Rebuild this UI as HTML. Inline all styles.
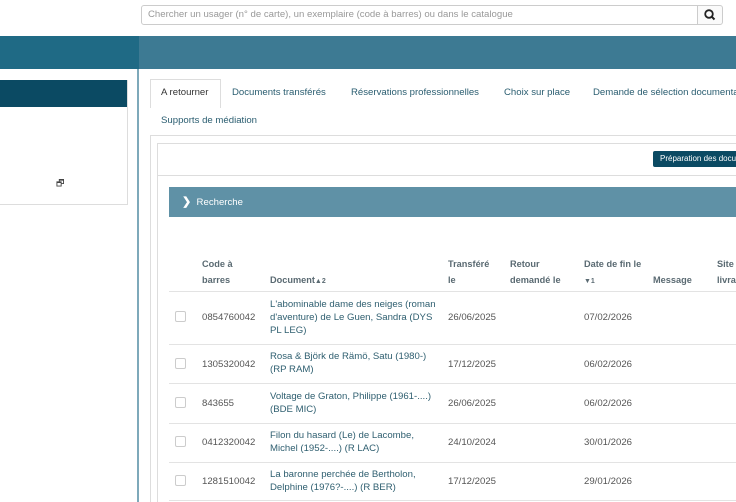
<!DOCTYPE html>
<html style="overflow:hidden;width:736px;height:502px"><head><meta charset="utf-8"><style>
*{box-sizing:border-box;margin:0;padding:0}
body{width:736px;height:502px;overflow:hidden;background:#fff;font-family:"Liberation Sans",sans-serif;font-size:10px;color:#333;position:relative}
.a{position:absolute}
.td{position:absolute;color:#555;font-size:9.6px;line-height:13px;white-space:nowrap}
.dc{color:#2f5f70}
.th{position:absolute;font-size:9.2px;line-height:16px;font-weight:bold;color:#5a6a72}
.cb{position:absolute;left:175px;width:11px;height:11px;border:1px solid #ccc;border-radius:2px}
.hr{position:absolute;left:169px;right:0;height:1px;background:#e3e3e3}
</style></head><body>
<div class="a" style="left:141px;top:5px;width:557px;height:20px;border:1px solid #ccc;border-radius:3px 0 0 3px;color:#999;font-size:9.6px;line-height:18px;padding-left:6px;white-space:nowrap">Chercher un usager (n° de carte), un exemplaire (code à barres) ou dans le catalogue</div>
<div class="a" style="left:697px;top:5px;width:26px;height:20px;border:1px solid #ccc;background:#fafafa;border-radius:0 3px 3px 0">
<svg width="24" height="18" viewBox="0 0 24 18"><circle cx="11" cy="8" r="3.8" fill="none" stroke="#222" stroke-width="1.8"/><path d="M13.7 10.7 L16.5 13.5" stroke="#222" stroke-width="2"/></svg></div>
<div class="a" style="left:0;top:36px;width:139px;height:33px;background:#1f6a85"></div>
<div class="a" style="left:139px;top:36px;right:0;height:33px;background:#3d7a93"></div>
<div class="a" style="left:137px;top:69px;width:2px;height:433px;background:#7ea9ba"></div>
<div class="a" style="left:0;top:80px;width:128px;height:125px;border:1px solid #ddd;border-left:none"></div>
<div class="a" style="left:0;top:80px;width:127px;height:27px;background:#0b4a63"></div>
<div class="a" style="left:56px;top:176px;font-size:9px;color:#444">&#x1F5D7;</div>
<div class="a" style="left:150px;top:79px;width:71px;height:29px;border:1px solid #ddd;border-bottom:none;background:#fff"></div>
<div class="a" style="left:161px;top:87px;color:#333;font-size:9.6px">A retourner</div>
<div class="a" style="left:232px;top:87px;color:#2a5d70;font-size:9.6px">Documents transférés</div>
<div class="a" style="left:351px;top:87px;color:#2a5d70;font-size:9.6px">Réservations professionnelles</div>
<div class="a" style="left:504px;top:87px;color:#2a5d70;font-size:9.6px">Choix sur place</div>
<div class="a" style="left:593px;top:87px;color:#2a5d70;font-size:9.6px;white-space:nowrap">Demande de sélection documentaire</div>
<div class="a" style="left:161px;top:115px;color:#2a5d70;font-size:9.6px">Supports de médiation</div>
<div class="a" style="left:150px;top:135px;width:586px;height:367px;border:1px solid #ddd;border-right:none;border-bottom:none"></div>
<div class="a" style="left:157px;top:143px;width:579px;height:33px;border:1px solid #ddd;border-right:none"></div>
<div class="a" style="left:653px;top:151px;width:100px;height:16px;background:#0b4a63;border-radius:2px;color:#fff;font-size:8px;line-height:16px;padding-left:7px;white-space:nowrap">Préparation des documents</div>
<div class="a" style="left:157px;top:176px;width:1px;height:326px;background:#ddd"></div>
<div class="a" style="left:169px;top:187px;right:0;height:30px;background:#5f91a6;color:#fff;font-size:9.6px;line-height:30px;padding-left:13px"><b style="font-size:11px">&#x276F;</b>&nbsp; Recherche</div>
<div class="th" style="left:202px;top:256px">Code à<br>barres</div>
<div class="th" style="left:270px;top:272px">Document<span style="font-size:7px">▲2</span></div>
<div class="th" style="left:448px;top:256px">Transféré<br>le</div>
<div class="th" style="left:510px;top:256px">Retour<br>demandé le</div>
<div class="th" style="left:584px;top:256px">Date de fin le<br><span style="font-size:7px">▼1</span></div>
<div class="th" style="left:653px;top:272px">Message</div>
<div class="th" style="left:717px;top:256px">Site<br>livra</div>
<div class="hr" style="top:291px"></div>
<div class="cb" style="top:311px"></div><div class="td" style="left:202px;top:311px">0854760042</div>
<div class="td dc" style="left:270px;top:298px">L'abominable dame des neiges (roman<br>d'aventure) de Le Guen, Sandra (DYS<br>PL LEG)</div>
<div class="td" style="left:448px;top:311px">26/06/2025</div><div class="td" style="left:584px;top:311px">07/02/2026</div>
<div class="hr" style="top:344px"></div>
<div class="cb" style="top:358px"></div><div class="td" style="left:202px;top:358px">1305320042</div>
<div class="td dc" style="left:270px;top:350px">Rosa &amp; Björk de Rämö, Satu (1980-)<br>(RP RAM)</div>
<div class="td" style="left:448px;top:358px">17/12/2025</div><div class="td" style="left:584px;top:358px">06/02/2026</div>
<div class="hr" style="top:383px"></div>
<div class="cb" style="top:397px"></div><div class="td" style="left:202px;top:397px">843655</div>
<div class="td dc" style="left:270px;top:390px">Voltage de Graton, Philippe (1961-....)<br>(BDE MIC)</div>
<div class="td" style="left:448px;top:397px">26/06/2025</div><div class="td" style="left:584px;top:397px">06/02/2026</div>
<div class="hr" style="top:423px"></div>
<div class="cb" style="top:436px"></div><div class="td" style="left:202px;top:436px">0412320042</div>
<div class="td dc" style="left:270px;top:429px">Filon du hasard (Le) de Lacombe,<br>Michel (1952-....) (R LAC)</div>
<div class="td" style="left:448px;top:436px">24/10/2024</div><div class="td" style="left:584px;top:436px">30/01/2026</div>
<div class="hr" style="top:462px"></div>
<div class="cb" style="top:475px"></div><div class="td" style="left:202px;top:475px">1281510042</div>
<div class="td dc" style="left:270px;top:468px">La baronne perchée de Bertholon,<br>Delphine (1976?-....) (R BER)</div>
<div class="td" style="left:448px;top:475px">17/12/2025</div><div class="td" style="left:584px;top:475px">29/01/2026</div>
<div class="hr" style="top:500px"></div>
</body></html>
